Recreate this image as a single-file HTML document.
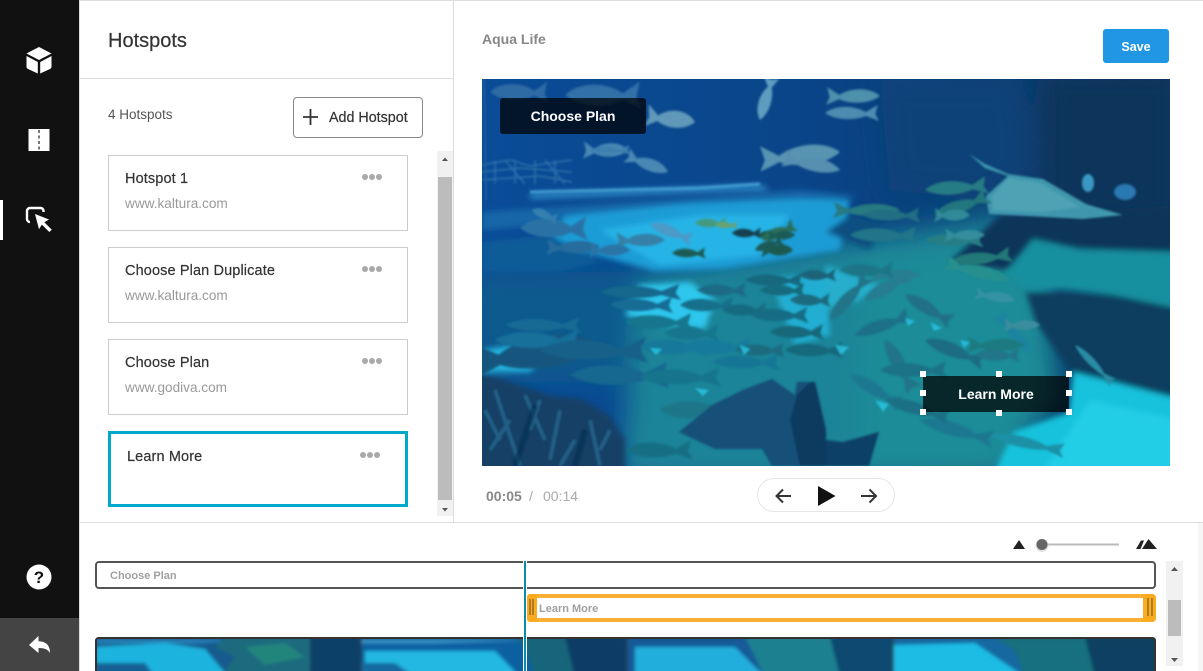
<!DOCTYPE html>
<html><head><meta charset="utf-8"><style>
html,body{margin:0;padding:0;width:1203px;height:671px;overflow:hidden;background:#fff;font-family:"Liberation Sans",sans-serif}
div,span{position:absolute;box-sizing:border-box}
.t{white-space:nowrap}
.card{left:108px;width:300px;height:76px;border:1px solid #ccc;background:#fff}
.h{left:16px;top:14px;font-size:14.5px;line-height:18px;color:#333;letter-spacing:.12px;-webkit-text-stroke:.2px #333}
.u{left:16px;top:40px;font-size:13.6px;line-height:16px;color:#999}
.dot{width:6px;height:6px;border-radius:50%;background:#a9a9a9;top:18px}
.hd{width:6px;height:6px;background:#fff}
</style></head><body>
<div style="left:0;top:0;width:1203px;height:1px;background:#ddd"></div>
<div style="left:0;top:0;width:79px;height:671px;background:#111"></div>
<div style="left:79px;top:0;width:1px;height:671px;background:#ddd"></div>
<div style="left:0;top:618px;width:79px;height:53px;background:#444"></div>
<div style="left:0;top:200px;width:3px;height:40px;background:#fff"></div>
<svg style="position:absolute;left:0;top:0" width="79" height="671" viewBox="0 0 79 671">
<path d="M39 47L51.500 53.500L39 60L26.500 53.500Z M26.500 56L37.800 62V73.500L28 69Q26.500 68.300 26.500 67Z M51.500 56L40.200 62V73.500L50 69Q51.500 68.300 51.500 67Z" fill="#fff"/>
<rect x="28.500" y="129" width="21" height="22" fill="#fff"/>
<path d="M39 130V151" stroke="#555" stroke-width="1.600" stroke-dasharray="3 2.500"/>
<path d="M43.500 212V211a3 3 0 0 0-3-3H30a3 3 0 0 0-3 3v8a3 3 0 0 0 3 3" fill="none" stroke="#fff" stroke-width="2.400"/>
<path d="M35 214L49 219.500L44.300 222.300L51.800 229.800L49.300 232L41.800 224.600L39 229.300Z" fill="#fff"/>
<circle cx="39" cy="577" r="12.500" fill="#fff"/>
<text x="39" y="583" text-anchor="middle" font-family="Liberation Sans" font-weight="700" font-size="17" fill="#111">?</text>
<path d="M29 645L38.500 636V641.200Q50 641.500 50 653Q47 647.500 38.500 648V653Z" fill="#fff"/>
</svg>

<div class="t" style="left:108px;top:29px;font-size:20px;line-height:24px;color:#333;-webkit-text-stroke:.2px #333">Hotspots</div>
<div style="left:80px;top:78px;width:373px;height:1px;background:#ddd"></div>
<div style="left:453px;top:0;width:1px;height:522px;background:#ddd"></div>
<div style="left:80px;top:522px;width:1123px;height:1px;background:#ddd"></div>
<div class="t" style="left:108px;top:107px;font-size:13.500px;line-height:16px;color:#555">4 Hotspots</div>
<div style="left:293px;top:97px;width:130px;height:41px;border:1px solid #888;border-radius:4px;background:#fff"></div>
<svg style="position:absolute;left:300px;top:107px" width="20" height="20"><path d="M10.500 2V18M3 10H18" stroke="#333" stroke-width="1.800"/></svg>
<div class="t" style="left:329px;top:110px;font-size:14.300px;line-height:17px;color:#333;-webkit-text-stroke:.2px #333">Add Hotspot</div>

<div class="card" style="top:155px"><span class="h t">Hotspot 1</span><span class="u t">www.kaltura.com</span><i class="dot" style="position:absolute;left:253px"></i><i class="dot" style="position:absolute;left:260px"></i><i class="dot" style="position:absolute;left:267px"></i></div>
<div class="card" style="top:247px"><span class="h t">Choose Plan Duplicate</span><span class="u t">www.kaltura.com</span><i class="dot" style="position:absolute;left:253px"></i><i class="dot" style="position:absolute;left:260px"></i><i class="dot" style="position:absolute;left:267px"></i></div>
<div class="card" style="top:339px"><span class="h t">Choose Plan</span><span class="u t">www.godiva.com</span><i class="dot" style="position:absolute;left:253px"></i><i class="dot" style="position:absolute;left:260px"></i><i class="dot" style="position:absolute;left:267px"></i></div>
<div class="card" style="top:431px;border:3px solid #00a9cc"><span class="h t">Learn More</span><i class="dot" style="position:absolute;left:249px;top:18px"></i><i class="dot" style="position:absolute;left:256px;top:18px"></i><i class="dot" style="position:absolute;left:263px;top:18px"></i></div>

<div style="left:437px;top:151px;width:16px;height:365px;background:#f1f1f1"></div>
<div style="left:438px;top:177px;width:14px;height:323px;background:#bcbcbc"></div>
<svg style="position:absolute;left:437px;top:151px" width="16" height="365"><path d="M5 10L8 6.500L11 10Z M5 357L8 360.500L11 357Z" fill="#555"/></svg>

<div class="t" style="left:482px;top:30px;font-size:14px;line-height:18px;font-weight:700;color:#888">Aqua Life</div>
<div class="t" style="left:1103px;top:29px;width:66px;height:34px;background:#2196e3;border-radius:3px;color:#fff;font-size:12.500px;font-weight:700;line-height:36px;text-align:center">Save</div>

<svg style="position:absolute;left:482px;top:79px" width="688" height="387" viewBox="482 79 688 387">
<defs>
<path id="f" d="M0 0C8-8 24-8 34-1L44-8L42 1L45 8L34 3C24 8 8 7 0 0Z"/>
<linearGradient id="bg" x1="0" y1="0" x2="1" y2="0"><stop offset="0" stop-color="#0a4c98"/><stop offset=".5" stop-color="#0a4487"/><stop offset="1" stop-color="#083862"/></linearGradient>
<filter id="b8" x="-10%" y="-10%" width="120%" height="120%"><feGaussianBlur stdDeviation="13"/></filter>
<filter id="b3" x="-10%" y="-10%" width="120%" height="120%"><feGaussianBlur stdDeviation="3"/></filter>
<filter id="b1" x="-5%" y="-5%" width="110%" height="110%"><feGaussianBlur stdDeviation="1"/></filter>
</defs>
<rect x="482" y="79" width="688" height="387" fill="url(#bg)"/>
<g filter="url(#b8)">
<rect x="470" y="272" width="360" height="110" fill="#0d5a8e"/>
<path d="M880 80L1020 80L1030 170L990 200L890 190Z" fill="#0a4278"/>
<path d="M1040 70L1180 70V230L1040 220Z" fill="#07345c"/>
<path d="M640 275L1010 215L1030 480H620Z" fill="#1c8498"/>
<path d="M860 260L1040 240L1060 400L980 480H860Z" fill="#1f8c98"/>
</g>
<g filter="url(#b3)">
<path d="M482 212L800 190L860 196L800 204L482 230Z" fill="#1466a8"/>
<path d="M530 193L760 184L770 190L530 199Z" fill="#2a86c4"/>
<path d="M565 216L682 204L799 199L850 200L840 250L722 269L655 271L549 242Z" fill="#1a9cd6"/>
<path d="M600 230L700 215L790 215L760 255L660 265Z" fill="#26b4e6"/>
<path d="M482 242L550 235L600 262L560 272H482Z" fill="#0f5c98"/>
<path d="M639 285L690 282L715 300L705 329L660 325L625 315Z" fill="#2ec6ec"/>
<path d="M482 350L530 342L550 350L530 372H482Z" fill="#22b4de"/>
<path d="M770 278L826 275L830 335L795 345Z" fill="#24aed2"/>
<path d="M826 265L880 285L860 300L826 310Z" fill="#26aecc"/>
<path d="M1000 215L1180 205V255L1040 245L1005 270L950 262Z" fill="#08345a"/>
<path d="M1006 272L1033 239L1079 249L1180 252V309L1113 295L1059 289L1030 292Z" fill="#128f9f"/>
<path d="M1026 292L1113 295L1180 309V399L1113 382L1073 372L1059 355L1036 322Z" fill="#0a3e5e"/>
<path d="M1073 372L1113 382L1180 399V476H993L1013 432L1069 412Z" fill="#14c2dc"/>
<path d="M1090 400L1180 420V476H1040Z" fill="#20cde6"/>
<path d="M475 372L502 379L549 395L582 399L609 415L625 439L625 476H475Z" fill="#123f66"/>
<path d="M826 232L850 215L880 225L870 250Z" fill="#0f4f80"/>
</g>
<g filter="url(#b1)">
<g stroke="#3d85b5" stroke-width="1.400" fill="none" opacity=".7">
<path d="M482 165L510 160L530 166L572 160M482 172L520 168L572 172M482 180L540 176L572 182M495 160V184M515 160V184M535 160V184M555 160V184M505 160L525 184M545 160L565 184"/>
</g>
<path d="M530 192L700 188L760 184" stroke="#4aa6d8" stroke-width="3" fill="none" opacity=".8"/>
<path d="M484 79L486 200" stroke="#1a5e9c" stroke-width="2"/>
<g stroke="#24688f" stroke-width="4" fill="none" opacity=".8">
<path d="M495 390L520 466M525 395L545 440M560 410L550 460M590 420L600 466M510 420L490 450M575 440L560 466M610 430L600 450M485 410L500 440M540 400L530 430"/>
</g>
<g stroke="#0a2d50" stroke-width="6" fill="none" opacity=".6"><path d="M535 405L515 466M585 430L575 466"/></g>
<g>
<use href="#f" transform="translate(490 92) scale(1.300)" fill="#2d6aa4"/>
<use href="#f" transform="translate(565 95) scale(1.700)" fill="#336fa8"/>
<use href="#f" transform="translate(695 122) rotate(8) scale(-1.100 1.400)" fill="#5e98b8"/>
<use href="#f" transform="translate(628 150) scale(-1 1.100)" fill="#4a88b4"/>
<use href="#f" transform="translate(668 172) rotate(22) scale(-1 1)" fill="#4a88b4"/>
<use href="#f" transform="translate(590 150) scale(.9 .6)" fill="#3d80b0"/>
<use href="#f" transform="translate(760 120) rotate(-75) scale(1 1)" fill="#5f9cc0"/>
<use href="#f" transform="translate(840 152) rotate(-5) scale(-1.800 1.600)" fill="#5694b2"/>
<use href="#f" transform="translate(840 170) rotate(12) scale(-1.300 1.100)" fill="#5590b0"/>
<use href="#f" transform="translate(825 113) scale(1.200 1)" fill="#4e8cb0"/>
<use href="#f" transform="translate(520 228) scale(1.500)" fill="#2a72a6"/>
<use href="#f" transform="translate(600 247) scale(-1.200 1)" fill="#286c9c"/>
<use href="#f" transform="translate(665 240) scale(-1.100 1)" fill="#3580a8"/>
<use href="#f" transform="translate(630 250) scale(-.9 .9)" fill="#2c74a6"/>
<use href="#f" transform="translate(650 224) rotate(20) scale(1 .9)" fill="#4b9ac8"/>
<use href="#f" transform="translate(695 223) scale(.7)" fill="#459a80"/>
<use href="#f" transform="translate(532 210) rotate(20) scale(.6 .7)" fill="#3680b0"/>
</g>
<path d="M969 154L985 164L1008 174L1043 179L1086 204L1123 215L1083 219L989 214L986 196L1008 176L985 168Z" fill="#3f97ad"/>
<path d="M1008 178L1040 183L1080 207L1040 212L993 210L992 197Z" fill="#50a2b4"/>
<g>
<use href="#f" transform="translate(880 96) scale(-1.200 1.100)" fill="#4d90ac"/>
<use href="#f" transform="translate(925 190) scale(1.400 1.100) rotate(-6)" fill="#257c84"/>
<use href="#f" transform="translate(935 215) scale(1.300 1) rotate(-25)" fill="#24767e"/>
<use href="#f" transform="translate(900 210) scale(-1.500 1)" fill="#267a82"/>
<use href="#f" transform="translate(862 215) scale(1.300 .9)" fill="#206e82"/>
<use href="#f" transform="translate(850 235) scale(1.500 1.100)" fill="#227488"/>
<use href="#f" transform="translate(925 240) scale(1.300 .9)" fill="#267e84"/>
<use href="#f" transform="translate(970 215) scale(-.8 .9)" fill="#328a98"/>
<use href="#f" transform="translate(950 262) scale(1.400 1) rotate(-10)" fill="#247878"/>
<use href="#f" transform="translate(985 235) scale(-.9 .8)" fill="#348e9c"/>
<use href="#f" transform="translate(758 235) scale(.6 .7)" fill="#1e5a50"/>
<use href="#f" transform="translate(793 250) scale(-.7 .9)" fill="#1f5a50"/>
<use href="#f" transform="translate(762 240) rotate(-25) scale(.8 .9)" fill="#2b6e5a"/>
<use href="#f" transform="translate(795 235) scale(-.6 .7)" fill="#1c5a58"/>
</g>
<g>
<use href="#f" transform="translate(600 345) scale(-3 2.600) rotate(8)" fill="#14567e"/>
<use href="#f" transform="translate(495 340) scale(1.900 1.300)" fill="#15709a"/>
<use href="#f" transform="translate(505 325) scale(1.700 1)" fill="#166a94"/>
<use href="#f" transform="translate(540 350) scale(2.400 1.600)" fill="#12608a"/>
<use href="#f" transform="translate(600 292) scale(1.800 1)" fill="#15688c"/>
<use href="#f" transform="translate(610 305) scale(1.400 1)" fill="#176c94"/>
<use href="#f" transform="translate(625 322) scale(1.500 1.100)" fill="#18768e"/>
<use href="#f" transform="translate(665 333) scale(1.200 1.100)" fill="#18768e"/>
<use href="#f" transform="translate(640 347) scale(1.500 1.200)" fill="#18789a"/>
<use href="#f" transform="translate(680 347) scale(1.600 1.200)" fill="#187a9c"/>
<use href="#f" transform="translate(712 362) scale(1.500 1)" fill="#187696"/>
<use href="#f" transform="translate(570 375) scale(2.200 1.600)" fill="#176890"/>
<use href="#f" transform="translate(640 377) scale(1.800 1.200)" fill="#18748c"/>
<use href="#f" transform="translate(660 410) scale(1.700 1.400)" fill="#1a7688"/>
<use href="#f" transform="translate(625 450) scale(1.500 1.200)" fill="#186e84"/>
<use href="#f" transform="translate(680 305) scale(1.200 1)" fill="#18708c"/>
<use href="#f" transform="translate(697 290) scale(1.100 .9)" fill="#1a6a86"/>
<use href="#f" transform="translate(722 310) scale(1 .9)" fill="#186a80"/>
<use href="#f" transform="translate(735 350) scale(1.100 .9)" fill="#1a6a7e"/>
<use href="#f" transform="translate(760 290) scale(1 .9)" fill="#196c7e"/>
<use href="#f" transform="translate(770 332) scale(1.200 1)" fill="#18687a"/>
<use href="#f" transform="translate(750 315) scale(1.300 1)" fill="#186c84"/>
<use href="#f" transform="translate(785 350) scale(1.300 1)" fill="#18687c"/>
<use href="#f" transform="translate(790 300) scale(.9)" fill="#1a6a7e"/>
<use href="#f" transform="translate(745 280) scale(1.300 .9)" fill="#19687e"/>
<use href="#f" transform="translate(800 275) scale(.8)" fill="#1a6278"/>
<use href="#f" transform="translate(830 320) rotate(-50) scale(1.300 1)" fill="#237488"/>
<use href="#f" transform="translate(865 300) rotate(-30) scale(1.100 1)" fill="#257c90"/>
<use href="#f" transform="translate(885 340) rotate(60) scale(1.300 1.100)" fill="#227488"/>
<use href="#f" transform="translate(905 295) rotate(30) scale(1.200 1)" fill="#217086"/>
<use href="#f" transform="translate(920 275) scale(-1.100 .9)" fill="#267e90"/>
<use href="#f" transform="translate(1030 352) rotate(50) scale(-1.100 .9)" fill="#1d84a0"/>
<use href="#f" transform="translate(1025 345) scale(-1.300 1)" fill="#1d7a80"/>
<use href="#f" transform="translate(1040 325) scale(-.8 .8)" fill="#3a8c9c"/>
<use href="#f" transform="translate(1010 280) rotate(15) scale(-1.500 1)" fill="#28908e"/>
<use href="#f" transform="translate(1015 300) rotate(10) scale(-.9 .8)" fill="#3692a4"/>
<use href="#f" transform="translate(1075 345) rotate(45) scale(1.200 .6)" fill="#2a8ca4"/>
<use href="#f" transform="translate(850 375) rotate(30) scale(1.300 1)" fill="#1d7890"/>
<use href="#f" transform="translate(880 370) scale(1.500 1.100)" fill="#1b7286"/>
<use href="#f" transform="translate(920 420) rotate(15) scale(1.700 1.100)" fill="#1c7890"/>
<use href="#f" transform="translate(885 400) rotate(15) scale(1.500 1)" fill="#1b7086"/>
<use href="#f" transform="translate(990 435) rotate(12) scale(1.700 .9)" fill="#1f90a6"/>
<use href="#f" transform="translate(840 270) scale(1.200 1)" fill="#1f7688"/>
<use href="#f" transform="translate(855 335) rotate(-20) scale(1.300 1)" fill="#1f7088"/>
<use href="#f" transform="translate(925 340) rotate(20) scale(1.400 1.100)" fill="#1d6c82"/>
<use href="#f" transform="translate(975 355) scale(1 .9)" fill="#207688"/>
</g>
<g fill="#27c0de" opacity=".9"><path d="M905 318l10 3-7 5z M930 322l12 6-8 3z M960 340l10 2-6 6z M835 345l14 2-8 8z M875 400l14 4-6 8z M650 348l12 1-6 6z M740 345l10 4-6 6z M695 388l14 2-6 6z"/></g>
<path d="M679 432L712 405L745 389L772 379L795 395L797 382L815 382L826 429L826 466H772L762 449L715 449Z" fill="#174f78"/>
<path d="M810 382L815 382L826 430L826 466L800 466L790 420L797 395Z" fill="#0f3a60"/>
<path d="M826 440L843 442L879 432L869 466H826Z" fill="#0e3f66"/>
<use href="#f" transform="translate(715 225) scale(.5 .5)" fill="#6ba070"/>
<use href="#f" transform="translate(732 233) scale(.65 .7)" fill="#133f50"/>
<use href="#f" transform="translate(672 253) scale(.75 .7)" fill="#1e5a52"/>
<use href="#f" transform="translate(755 250) rotate(-20) scale(.65 .7)" fill="#1d5a58"/>
<ellipse cx="1125" cy="192" rx="11" ry="8" fill="#2a78b0"/>
<ellipse cx="1088" cy="183" rx="6" ry="9" fill="#3a98c4"/>
</g>
</svg>

<div style="left:500px;top:98px;width:146px;height:36px;background:rgba(0,0,0,.72);border-radius:3px"></div>
<div class="t" style="left:500px;top:98px;width:146px;height:36px;line-height:36px;text-align:center;color:#fff;font-weight:700;font-size:14px">Choose Plan</div>
<div style="left:923px;top:376px;width:146px;height:36px;background:rgba(0,0,0,.72)"></div>
<div class="t" style="left:923px;top:376px;width:146px;height:36px;line-height:36px;text-align:center;color:#fff;font-weight:700;font-size:14px">Learn More</div>
<div class="hd" style="left:920px;top:371px"></div><div class="hd" style="left:996px;top:371px"></div><div class="hd" style="left:1066px;top:371px"></div>
<div class="hd" style="left:920px;top:390px"></div><div class="hd" style="left:1066px;top:390px"></div>
<div class="hd" style="left:920px;top:409px"></div><div class="hd" style="left:996px;top:410px"></div><div class="hd" style="left:1066px;top:409px"></div>

<div class="t" style="left:486px;top:488px;font-size:14px;line-height:17px;font-weight:700;color:#888">00:05</div>
<div class="t" style="left:529px;top:488px;font-size:14px;line-height:17px;color:#aaa">/</div>
<div class="t" style="left:543px;top:488px;font-size:14px;line-height:17px;color:#aaa">00:14</div>
<div style="left:757px;top:478px;width:138px;height:34px;border:1px solid #e6e6e6;border-radius:17px;background:#fff"></div>
<svg style="position:absolute;left:757px;top:478px" width="138" height="34">
<path d="M34 18H19M26 11.500L19.500 18L26 24.500" fill="none" stroke="#333" stroke-width="2"/>
<path d="M61 8L78.500 18L61 28Z" fill="#111"/>
<path d="M104 18H119M112.500 11.500L119 18L112.500 24.500" fill="none" stroke="#333" stroke-width="2"/>
</svg>

<svg style="position:absolute;left:1005px;top:533px" width="160" height="24">
<path d="M8 16L14 7L20 16Z" fill="#222"/>
<rect x="37" y="10.500" width="77" height="2" fill="#bbb"/>
<circle cx="37" cy="12.500" r="6.500" fill="#ccc" opacity=".6"/>
<circle cx="37" cy="11.500" r="5.500" fill="#666"/>
<path d="M131 16L136 7.500H139L135.500 16Z M137 16L143.500 6L152 16Z" fill="#222"/>
</svg>

<div style="left:95px;top:561px;width:1061px;height:28px;border:2px solid #555;border-radius:4px;background:#fff"></div>
<div class="t" style="left:110px;top:569px;font-size:11px;line-height:14px;font-weight:700;color:#a0a0a0">Choose Plan</div>
<div style="left:527px;top:594px;width:629px;height:28px;border:4px solid #fbb034;border-radius:4px;background:#fff"></div>
<div style="left:527px;top:594px;width:10px;height:28px;background:#fbab20;border-radius:3px 0 0 3px"></div>
<div style="left:528.500px;top:599px;width:2px;height:16px;background:#b07d22"></div>
<div style="left:532px;top:599px;width:2px;height:16px;background:#b07d22"></div>
<div style="left:1143px;top:594px;width:13px;height:28px;background:#fbab20;border-radius:0 4px 4px 0"></div>
<div style="left:1147px;top:598px;width:2px;height:18px;background:#b07d22"></div>
<div style="left:1151px;top:598px;width:2px;height:18px;background:#b07d22"></div>
<div class="t" style="left:539px;top:602px;font-size:11px;line-height:14px;font-weight:700;color:#a0a0a0">Learn More</div>

<svg style="position:absolute;left:95px;top:637px" width="1061" height="34" viewBox="0 0 1061 34">
<defs>
<filter id="tb" x="-2%" y="-20%" width="104%" height="140%"><feGaussianBlur stdDeviation="1.800"/></filter>
</defs>
<path d="M0 34V4Q0 0 4 0H1057Q1061 0 1061 4V34Z" fill="#333"/>
<svg x="2" y="2" width="1057" height="32" viewBox="2 2 1057 32">
<g filter="url(#tb)">
<rect width="266" height="40" fill="#155a8e"/>
<path d="M0 3H150L100 6H0Z" fill="#2a8cc4"/>
<path d="M0 10L70 6L110 12L125 30L135 40H0Z" fill="#1fb4de"/>
<path d="M0 26H50L60 40H0Z" fill="#155f94"/>
<path d="M130 0H266V40H125L140 20L120 10Z" fill="#1b6b7e"/>
<path d="M215 0H266V40H215Z" fill="#0d4068"/>
<path d="M150 10L190 6L210 20L170 28Z" fill="#20857c"/>
</g>
<g filter="url(#tb)">
<rect x="266" width="266" height="40" fill="#1060a0"/>
<path d="M266 3H440L340 6H266Z" fill="#3a9cd0"/>
<path d="M270 14H400L425 40H270Z" fill="#20b8e2"/>
<path d="M266 26H300L320 40H266Z" fill="#1668a0"/>
<path d="M420 0H532V40H440L430 10Z" fill="#16657a"/>
<path d="M470 0H532V40H480Z" fill="#0c3c66"/>
</g>
<g filter="url(#tb)">
<rect x="532" width="266" height="40" fill="#155a98"/>
<path d="M540 10H640L670 40H540Z" fill="#22aedc"/>
<path d="M650 0H798V40H670Z" fill="#1a8090"/>
<path d="M735 0H798V40H745Z" fill="#0f4a70"/>
</g>
<g filter="url(#tb)">
<rect x="798" width="263" height="40" fill="#1568a0"/>
<path d="M798 8L880 6L930 40H798Z" fill="#1ebce4"/>
<path d="M900 0H1061V40H930L920 14Z" fill="#17707e"/>
<path d="M990 0H1061V40H1000Z" fill="#0e3f62"/>
</g>
</svg>
</svg>

<div style="left:523px;top:561px;width:4px;height:110px;background:#fff"></div>
<div style="left:524px;top:561px;width:2px;height:110px;background:#0a8cac"></div>

<div style="left:1166px;top:561px;width:17px;height:105px;background:#f1f1f1"></div>
<div style="left:1168px;top:600px;width:13px;height:36px;background:#bcbcbc"></div>
<svg style="position:absolute;left:1166px;top:561px" width="17" height="105"><path d="M5 10L8.500 6L12 10Z M5 97L8.500 101L12 97Z" fill="#555"/></svg>
<div style="left:1198px;top:523px;width:5px;height:148px;background:#f6f6f6"></div>
</body></html>
